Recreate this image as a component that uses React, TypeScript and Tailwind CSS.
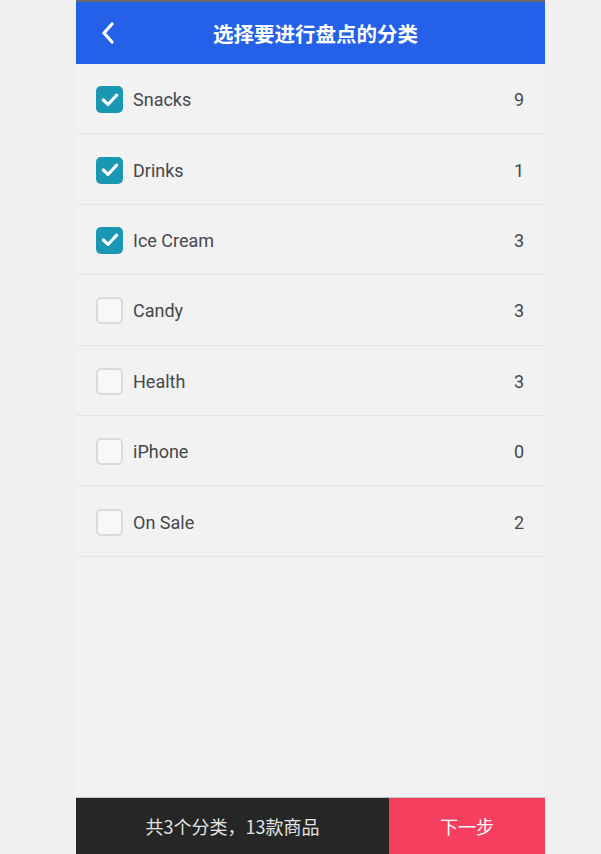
import React from "react";

const items = [
  { name: "Snacks", count: 9, checked: true },
  { name: "Drinks", count: 1, checked: true },
  { name: "Ice Cream", count: 3, checked: true },
  { name: "Candy", count: 3, checked: false },
  { name: "Health", count: 3, checked: false },
  { name: "iPhone", count: 0, checked: false },
  { name: "On Sale", count: 2, checked: false },
];

function Check({ checked }: { checked: boolean }) {
  if (checked) {
    return (
      <div className="w-[27px] h-[27px] rounded-[5px] bg-[#1a97b3] flex items-center justify-center">
        <svg width="20" height="20" viewBox="0 0 18 18" fill="none">
          <path d="M3 9 L7.2 13 L15 4.6" stroke="white" strokeWidth="2.8" strokeLinecap="round" strokeLinejoin="round" />
        </svg>
      </div>
    );
  }
  return <div className="w-[27px] h-[27px] rounded-[5px] border-2 border-[#dadada] bg-[#f8f8f8]" />;
}

export default function App() {
  return (
    <div
      className="min-h-screen bg-[#f0f0f0] flex"
      style={{ fontFamily: 'Roboto, "Noto Sans CJK SC", sans-serif' }}
    >
      <div className="ml-[76px] w-[469px] h-[854px] flex flex-col bg-[#f2f2f2]">
        <div className="h-[64px] border-t-2 border-[#6b6b6b] bg-[#2461e8] flex items-center relative">
          <div className="absolute left-[25px] top-[20px]">
            <svg width="14" height="22" viewBox="0 0 14 22" fill="none">
              <path d="M11 2 L3 11 L11 20" stroke="white" strokeWidth="3.2" strokeLinecap="round" strokeLinejoin="round" />
            </svg>
          </div>
          <div
            className="flex-1 text-center text-white text-[20.5px] font-bold pl-[10px]"
            style={{ fontFamily: '"Noto Sans CJK SC", sans-serif' }}
          >
            选择要进行盘点的分类
          </div>
        </div>
        <div className="flex-1 flex flex-col">
          {items.map((it) => (
            <div
              key={it.name}
              className="h-[70.4px] border-b border-[#e6e6e6] flex items-center pl-[20px] pr-[21px] pt-[2px]"
            >
              <Check checked={it.checked} />
              <span className="ml-[10px] text-[18px] text-[#45484d] flex-1">{it.name}</span>
              <span className="text-[18px] text-[#45484d]">{it.count}</span>
            </div>
          ))}
        </div>
        <div className="h-[57px] flex border-t border-[#c4c4c4]">
          <div
            className="w-[313px] bg-[#262626] flex items-center justify-center text-[#e4e4e4] text-[18px]"
            style={{ fontFamily: '"Noto Sans CJK SC", sans-serif' }}
          >
            共3个分类，13款商品
          </div>
          <div
            className="flex-1 bg-[#f43f5e] flex items-center justify-center text-white text-[18px]"
            style={{ fontFamily: '"Noto Sans CJK SC", sans-serif' }}
          >
            下一步
          </div>
        </div>
      </div>
    </div>
  );
}
